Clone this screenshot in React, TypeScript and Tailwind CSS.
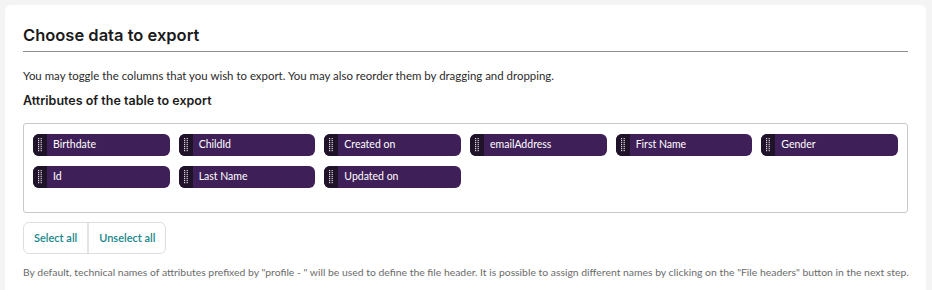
import { useState } from "react";

const columns = [
  "Birthdate",
  "ChildId",
  "Created on",
  "emailAddress",
  "First Name",
  "Gender",
  "Id",
  "Last Name",
  "Updated on",
];

function GripIcon() {
  return (
    <svg width="4" height="14" viewBox="0 0 4 14" className="block">
      {[0, 1, 2, 3, 4, 5, 6].map((r) => (
        <g key={r}>
          <rect x="0" y={r * 2} width="1.2" height="1.2" fill="#d9d3df" />
          <rect x="2.6" y={r * 2} width="1.2" height="1.2" fill="#d9d3df" />
        </g>
      ))}
    </svg>
  );
}

function Chip({ label }: { label: string }) {
  return (
    <div className="flex h-[22px] overflow-hidden rounded-[6px] bg-[#3f1f57] text-white">
      <div className="flex w-[14px] shrink-0 items-center justify-center bg-[#1f1329]">
        <GripIcon />
      </div>
      <span className="flex items-center pl-[6px] text-[10.5px]">{label}</span>
    </div>
  );
}

export default function App() {
  const [selected] = useState(columns);

  return (
    <div
      className="h-[290px] w-[932px] overflow-hidden bg-[#f3f4f3] pl-[5px] pr-[6px] pt-[5px]"
      style={{ fontFamily: "Lato, 'Open Sans', sans-serif" }}
    >
      <div className="h-full rounded-t-[6px] bg-white px-[18px] pt-[19px]">
        {/* Header */}
        <h1
          className="border-b border-[#8f8f8f] pb-[5px] text-[16.5px] font-semibold leading-[22px] text-[#1b1b1b]"
          style={{ fontFamily: "Inter, sans-serif" }}
        >
          Choose data to export
        </h1>

        <p className="mt-[17px] text-[11.45px] leading-[14px] text-[#2a2a2a]">
          You may toggle the columns that you wish to export. You may also reorder them by dragging and dropping.
        </p>
        <h2
          className="mt-[10px] text-[12.5px] font-semibold leading-[16px] text-[#1b1b1b]"
          style={{ fontFamily: "Inter, sans-serif" }}
        >
          Attributes of the table to export
        </h2>

        {/* Column chips */}
        <div className="mt-[14px] h-[90px] rounded-[3px] border border-[#c9c9c9] px-[9px] pt-[10px]">
          <div className="grid grid-cols-6 gap-x-[9px] gap-y-[10px]">
            {selected.map((c) => (
              <Chip key={c} label={c} />
            ))}
          </div>
        </div>

        {/* Select buttons */}
        <div className="mt-[9px] flex h-[32px] w-fit overflow-hidden rounded-[6px] border border-[#dedede] text-[11px] font-semibold text-[#16868a]">
          <button className="px-[10px]">Select all</button>
          <button className="border-l-2 border-[#e4e4e4] px-[10px]">Unselect all</button>
        </div>

        <p className="mt-[12px] whitespace-nowrap text-[10.4px] leading-[12px] text-[#6b6b6b]">
          By default, technical names of attributes prefixed by "profile - " will be used to define the file header. It is possible to assign different names by clicking on the "File headers" button in the next step.
        </p>
      </div>
    </div>
  );
}
